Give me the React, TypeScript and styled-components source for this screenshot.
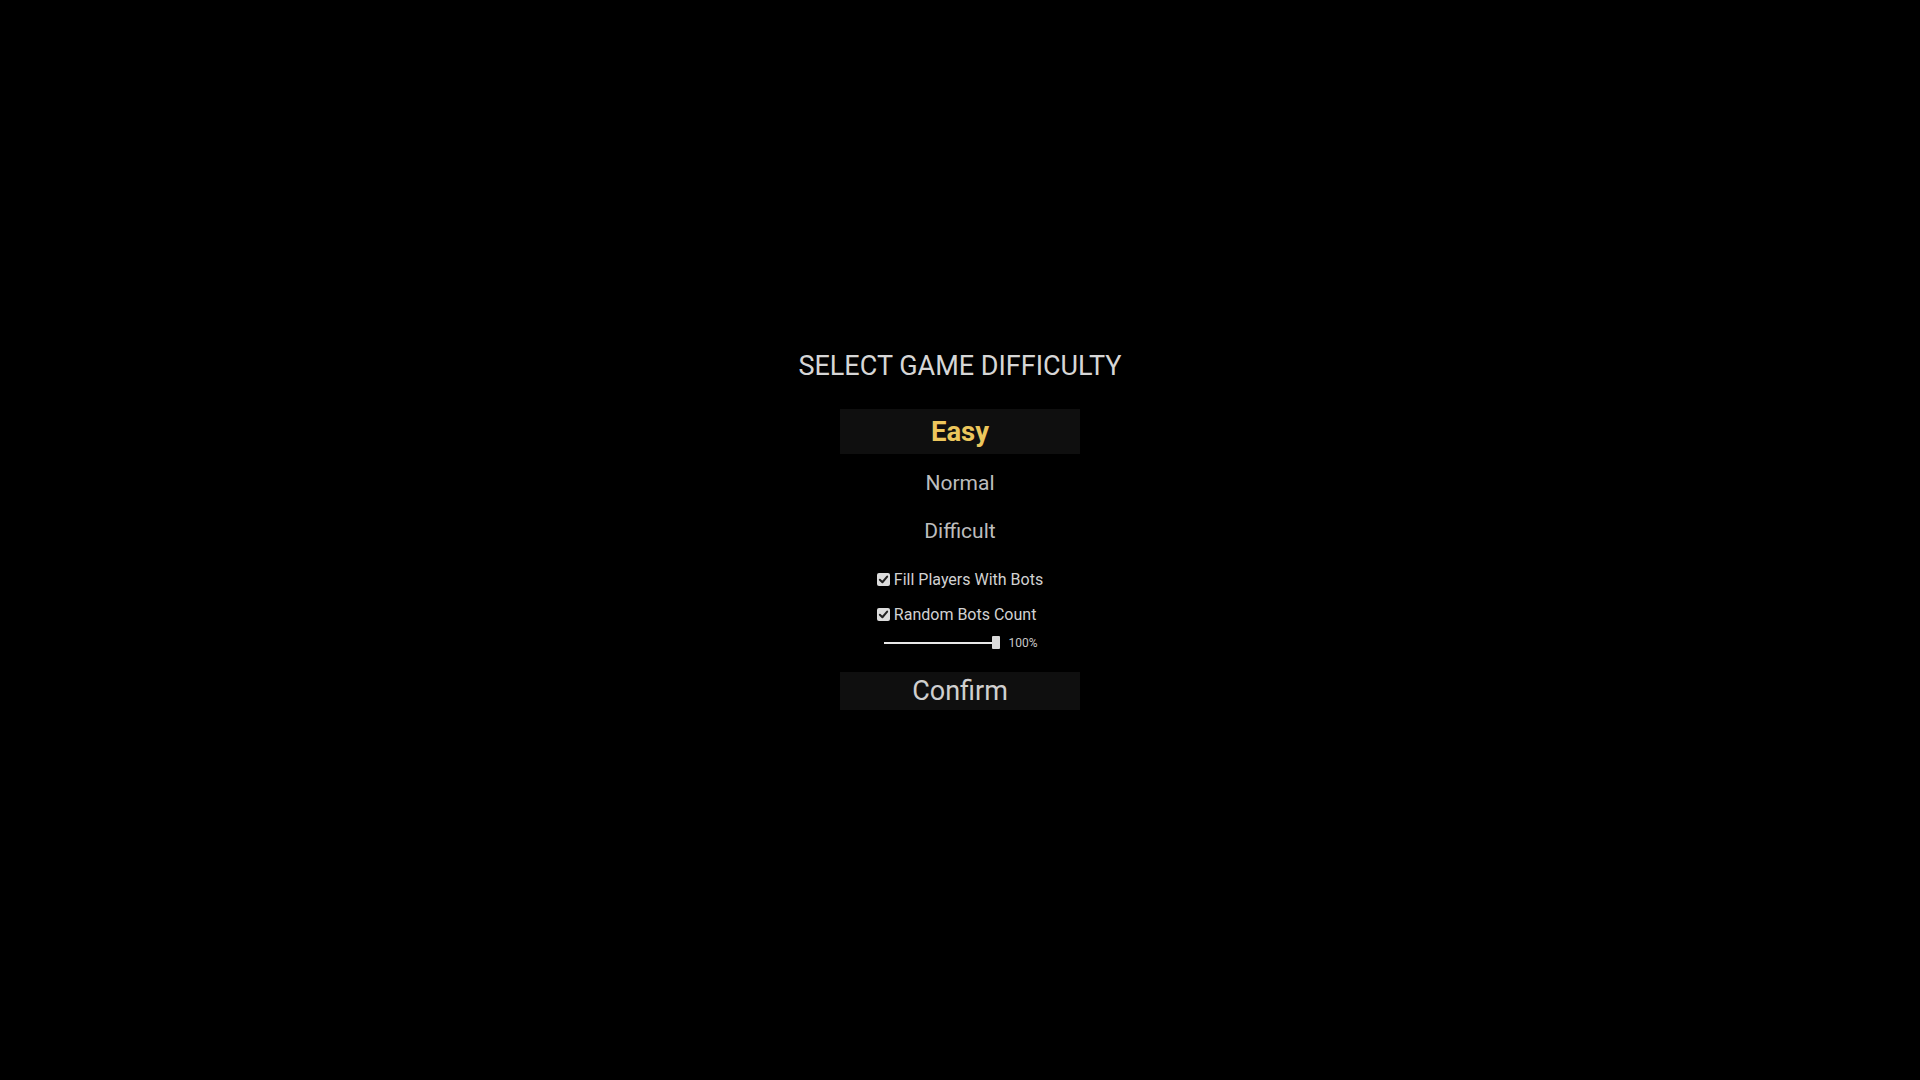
import React, { useState } from "react";
import styled, { createGlobalStyle } from "styled-components";

const GlobalStyle = createGlobalStyle`
  html, body {
    margin: 0;
    padding: 0;
    background: #000;
  }
  body {
    font-family: Roboto, "Liberation Sans", sans-serif;
  }
`;

const Screen = styled.div`
  width: 100%;
  min-height: 100vh;
  background: #000;
  display: flex;
  flex-direction: column;
  align-items: center;
  padding-top: 351px;
  box-sizing: border-box;
`;

const Title = styled.h1`
  margin: 0 0 28px;
  height: 30px;
  line-height: 30px;
  font-size: 27px;
  font-weight: 400;
  color: #d6d6d6;
`;

const Options = styled.div`
  width: 240px;
  display: flex;
  flex-direction: column;
`;

const Option = styled.button<{ $active?: boolean }>`
  width: 100%;
  height: ${(p) => (p.$active ? "45px" : "47.5px")};
  margin: 0;
  padding: 0;
  border: none;
  background: ${(p) => (p.$active ? "#0f0f0f" : "transparent")};
  color: ${(p) => (p.$active ? "#ecc65c" : "#bdbdbd")};
  font-family: Roboto, "Liberation Sans", sans-serif;
  font-size: ${(p) => (p.$active ? "27.5px" : "21px")};
  font-weight: ${(p) => (p.$active ? 700 : 400)};
  line-height: 1;
  cursor: pointer;
  &:first-child {
    margin-bottom: 6px;
  }
`;

const Settings = styled.div`
  margin-top: 11px;
  display: flex;
  flex-direction: column;
  align-items: flex-start;
  gap: 9px;
`;

const CheckRow = styled.label`
  height: 26px;
  display: flex;
  align-items: center;
  gap: 4px;
  color: #d2d2d2;
  font-size: 16px;
  cursor: pointer;
`;

const Box = styled.span`
  width: 13px;
  height: 13px;
  border-radius: 2px;
  background: #dcdcdc;
  display: flex;
  align-items: center;
  justify-content: center;
`;

const SliderRow = styled.div`
  margin-top: 7px;
  height: 18px;
  display: flex;
  align-items: center;
  gap: 8px;
  padding-left: 2px;
`;

const Track = styled.div`
  position: relative;
  width: 116px;
  height: 2px;
  background: #e8e8e8;
`;

const Thumb = styled.span`
  position: absolute;
  top: -6px;
  width: 8px;
  height: 13px;
  background: #d9d9d9;
  border-radius: 1px;
`;

const Percent = styled.span`
  color: #c8c8c8;
  font-size: 12px;
`;

const Confirm = styled.button`
  margin-top: 20px;
  width: 240px;
  height: 38px;
  border: none;
  padding: 0;
  background: #0f0f0f;
  color: #cfcfcf;
  font-family: Roboto, "Liberation Sans", sans-serif;
  font-size: 27px;
  font-weight: 400;
  line-height: 1;
  cursor: pointer;
`;

const Check = () => (
  <svg width="11" height="11" viewBox="0 0 12 12">
    <path d="M2 6.3 L4.8 9 L10 2.8" fill="none" stroke="#222" strokeWidth="2.2" strokeLinecap="round" strokeLinejoin="round" />
  </svg>
);

const difficulties = ["Easy", "Normal", "Difficult"];

export default function App() {
  const [selected, setSelected] = useState("Easy");
  const [fill, setFill] = useState(true);
  const [random, setRandom] = useState(true);
  const bots = 100;

  return (
    <Screen>
      <GlobalStyle />
      <Title>SELECT GAME DIFFICULTY</Title>
      <Options>
        {difficulties.map((d) => (
          <Option key={d} $active={d === selected} onClick={() => setSelected(d)}>
            {d}
          </Option>
        ))}
      </Options>
      <Settings>
        <CheckRow onClick={() => setFill(!fill)}>
          <Box>{fill && <Check />}</Box>
          Fill Players With Bots
        </CheckRow>
        <CheckRow onClick={() => setRandom(!random)}>
          <Box>{random && <Check />}</Box>
          Random Bots Count
        </CheckRow>
      </Settings>
      <SliderRow>
        <Track>
          <Thumb style={{ left: `calc(${bots}% - 8px)` }} />
        </Track>
        <Percent>{bots}%</Percent>
      </SliderRow>
      <Confirm>Confirm</Confirm>
    </Screen>
  );
}
